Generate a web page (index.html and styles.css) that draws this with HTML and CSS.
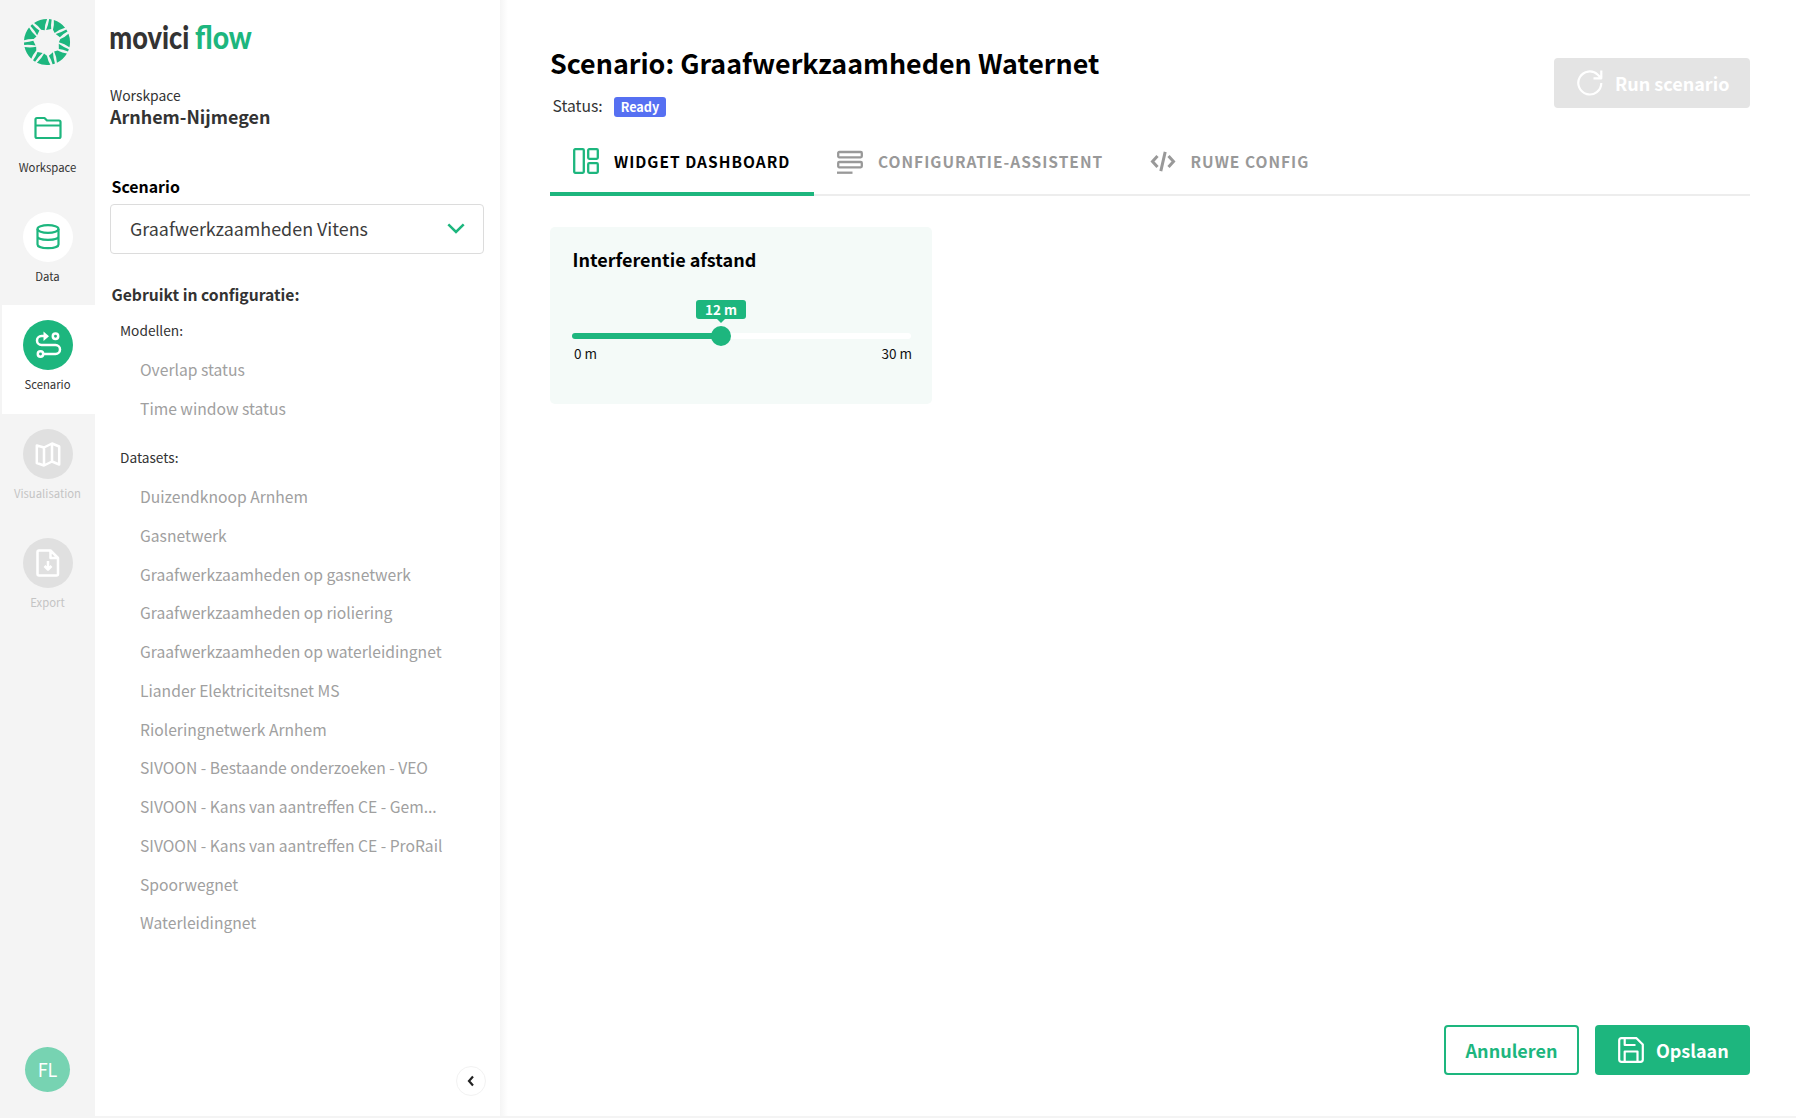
FILE: index.html
```html
<!DOCTYPE html>
<html lang="nl">
<head>
<meta charset="utf-8">
<title>Movici Flow</title>
<link rel="stylesheet" href="styles.css">
</head>
<body>
<div class="app">
  <nav class="rail">
    <svg class="rail-logo" viewBox="-24 -24 48 48">
      <g transform="rotate(-17)">
        <g id="blade">
          <path d="M-6.800-22A23 23 0 0 1 6.800-22Q3-17.500 1.200-11.800L-2-13.500Q-3.800-18.500-6.800-22Z"/>
          <path transform="rotate(25.710)" d="M-1.300-22.960A23 23 0 0 1 1.200-22.960Q1.100-17.500 2.200-13.600L-2.700-11.600Q-1.300-17-1.300-22.960Z"/>
        </g>
        <use href="#blade" transform="rotate(51.430)"/>
        <use href="#blade" transform="rotate(102.860)"/>
        <use href="#blade" transform="rotate(154.290)"/>
        <use href="#blade" transform="rotate(205.710)"/>
        <use href="#blade" transform="rotate(257.140)"/>
        <use href="#blade" transform="rotate(308.570)"/>
      </g>
    </svg>
    <a class="rail-item">
      <span class="disc"><svg viewBox="0 0 28 28" class="ico"><path d="M1.500 21V5.500Q1.500 4 3 4H10.500L13 6.500H25Q26.500 6.500 26.500 8V22.500Q26.500 24 25 24H3Q1.500 24 1.500 22.500ZM1.500 11.500H26.500"/></svg></span>
      <span class="rail-label">Workspace</span>
    </a>
    <a class="rail-item">
      <span class="disc"><svg viewBox="0 0 28 28" class="ico"><ellipse cx="14" cy="6" rx="10.500" ry="3.800"/><path d="M3.500 6V21.500C3.500 26.300 24.500 26.300 24.500 21.500V6M3.500 13.500C3.500 18 24.500 18 24.500 13.500"/></svg></span>
      <span class="rail-label">Data</span>
    </a>
    <a class="rail-item active">
      <span class="disc"><svg viewBox="0 0 28 28" class="ico"><path d="M11.500 5H7.500A4.500 4.500 0 0 0 7.500 14H21.500A4.500 4.500 0 0 1 21.500 23H9.500"/><path d="M9.500 .5 15 5.200 9.500 9.900Z" class="solid"/><circle cx="21.500" cy="5.200" r="2.700"/><circle cx="6.500" cy="23" r="2.700"/></svg></span>
      <span class="rail-label">Scenario</span>
    </a>
    <a class="rail-item disabled">
      <span class="disc"><svg viewBox="0 0 28 28" class="ico"><path d="M2.800 5.500 10 7.500 18 3.500 25.200 6.500V24.500L18 21.500 10 25.500 2.800 23ZM10 7.500V25.500M18 3.500V21.500"/></svg></span>
      <span class="rail-label">Visualisation</span>
    </a>
    <a class="rail-item disabled">
      <span class="disc"><svg viewBox="0 0 28 28" class="ico"><path d="M5 1.500H16.500L24 9V25Q24 26.500 22.500 26.500H5Q3.500 26.500 3.500 25V3Q3.500 1.500 5 1.500ZM16.500 1.500V9H24M14 12V20M10.500 17 14 20.500 17.500 17"/></svg></span>
      <span class="rail-label">Export</span>
    </a>
    <span class="avatar">FL</span>
  </nav>

  <aside class="panel">
    <div class="wordmark">
      <svg class="word-dark" viewBox="0 0 80 30"><text transform="scale(.8 1)" x="-1" y="24" textLength="100" lengthAdjust="spacingAndGlyphs">movici</text></svg>
      <svg class="word-green" viewBox="0 0 58 30"><text transform="scale(.8 1)" x="0" y="24" textLength="71" lengthAdjust="spacingAndGlyphs">flow</text></svg>
    </div>
    <div class="ws-label">Worskpace</div>
    <div class="ws-name">Arnhem-Nijmegen</div>
    <div class="field-label">Scenario</div>
    <div class="select"><span>Graafwerkzaamheden Vitens</span>
      <svg class="chevron" viewBox="0 0 18 11"><path d="M1.300 1.300 9 9 16.700 1.300"/></svg>
    </div>
    <h2 class="used">Gebruikt in configuratie:</h2>
    <h3 class="group">Modellen:</h3>
    <ul class="list">
      <li>Overlap status</li>
      <li>Time window status</li>
    </ul>
    <h3 class="group">Datasets:</h3>
    <ul class="list">
      <li>Duizendknoop Arnhem</li>
      <li>Gasnetwerk</li>
      <li>Graafwerkzaamheden op gasnetwerk</li>
      <li>Graafwerkzaamheden op rioliering</li>
      <li>Graafwerkzaamheden op waterleidingnet</li>
      <li>Liander Elektriciteitsnet MS</li>
      <li>Rioleringnetwerk Arnhem</li>
      <li>SIVOON - Bestaande onderzoeken - VEO</li>
      <li>SIVOON - Kans van aantreffen CE - Gem...</li>
      <li>SIVOON - Kans van aantreffen CE - ProRail</li>
      <li>Spoorwegnet</li>
      <li>Waterleidingnet</li>
    </ul>
    <button class="collapse"><svg viewBox="0 0 8 12"><path d="M6 1.500 2 6 6 10.500"/></svg></button>
  </aside>

  <main class="main">
    <header class="head">
      <div>
        <h1 class="title">Scenario: Graafwerkzaamheden Waternet</h1>
        <div class="status"><span class="status-label">Status:</span><span class="badge">Ready</span></div>
      </div>
      <button class="btn run"><svg class="ico" viewBox="0 0 28 28"><path d="M25.300 14A11.500 11.500 0 1 1 21.800 5.700L25 9M25.300 1.500V9.300H17.500"/></svg><span>Run scenario</span></button>
    </header>

    <div class="tabs">
      <a class="tab current"><svg viewBox="0 0 26 26"><rect x="1.200" y="1.200" width="9.600" height="23.600" rx="1"/><rect x="15.200" y="1.200" width="9.600" height="9.600" rx="1"/><rect x="15.200" y="15.200" width="9.600" height="9.600" rx="1"/></svg><span>WIDGET DASHBOARD</span></a>
      <a class="tab second"><svg viewBox="0 0 26 26"><rect x="1.200" y="3" width="23.600" height="5.300" rx="1"/><rect x="1.200" y="13" width="23.600" height="5.300" rx="1"/><path d="M0 23.700H15.500"/></svg><span>CONFIGURATIE-ASSISTENT</span></a>
      <a class="tab third"><svg viewBox="0 0 26 26"><path class="thick" d="M7.500 7 2.500 12.500 7.500 18M18.500 7 23.500 12.500 18.500 18M15.200 2.800 10.800 22.200"/></svg><span>RUWE CONFIG</span></a>
    </div>

    <section class="card">
      <h2 class="card-title">Interferentie afstand</h2>
      <div class="track">
        <div class="fill"></div>
        <div class="knob"><span class="tip">12 m</span></div>
      </div>
      <div class="scale"><span>0 m</span><span>30 m</span></div>
    </section>

    <footer class="actions">
      <button class="btn cancel">Annuleren</button>
      <button class="btn save"><svg class="ico" viewBox="0 0 26 26"><path d="M3.500 1.200H18.500L24.800 7.500V22.500Q24.800 24.800 22.500 24.800H3.500Q1.200 24.800 1.200 22.500V3.500Q1.200 1.200 3.500 1.200ZM6.700 1.200V8H17.500M6.700 24.800V14.500H19.500V24.800"/></svg><span>Opslaan</span></button>
    </footer>
  </main>
</div>
</body>
</html>
```
FILE: styles.css
```css
* { box-sizing: border-box; }
:root {
  --green: #1db67e;
  --ink: #333;
  --rail: #f4f4f4;
}
body {
  margin: 0;
  background: var(--rail);
  color: var(--ink);
  font-family: "Noto Sans CJK SC", "Noto Sans", sans-serif;
}
h1, h2, h3, ul { margin: 0; padding: 0; }
ul { list-style: none; }
button { font-family: inherit; padding: 0; border: 0; }
svg { display: block; fill: none; flex-shrink: 0; }
.app { display: flex; height: 1118px; }

/* Icon rail */
.rail {
  width: 95px;
  background: var(--rail);
  display: flex;
  flex-direction: column;
  align-items: flex-end;
}
.rail-logo { width: 48px; height: 48px; margin: 18px 24px 21.300px 0; fill: var(--green); }
.rail-item {
  width: 93px;
  height: 108.800px;
  padding-top: 15.500px;
  display: flex;
  flex-direction: column;
  align-items: center;
}
.rail-item.active { background: #fff; }
.disc {
  width: 50px;
  height: 50px;
  margin-right: 2px;
  border-radius: 50%;
  background: #fff;
  color: var(--green);
  display: flex;
  align-items: center;
  justify-content: center;
}
.active .disc { background: var(--green); color: #fff; }
.disabled .disc { background: #e0e0e0; color: #fff; }
.ico { width: 28px; height: 28px; stroke: currentColor; stroke-width: 2.200; stroke-linejoin: round; }
.active .ico, .disabled .ico { stroke-width: 2.500; }
.ico .solid { fill: currentColor; stroke: none; }
.rail-label { margin: 5px 2px 0 0; font-size: 11.300px; line-height: 18px; }
.disabled .rail-label { color: #c4c4c4; }
.avatar {
  width: 45px;
  height: 45px;
  margin: auto 25px 26.500px 0;
  border-radius: 50%;
  background: #77d3b2;
  color: #fff;
  font-size: 18px;
  line-height: 44px;
  text-align: center;
  font-weight: 400;
}

/* Scenario panel */
.panel {
  width: 405px;
  height: 1116px;
  padding: 25px 16px 0 15px;
  background: #fff;
  display: flex;
  flex-direction: column;
}
.wordmark { display: flex; gap: 5px; height: 30px; margin-bottom: 30px; }
.wordmark svg { height: 30px; overflow: visible; }
.wordmark text { font: 900 32px Lato, sans-serif; }
.word-dark { width: 80px; fill: var(--ink); }
.word-green { width: 58px; fill: var(--green); }
.ws-label { font-size: 13.900px; line-height: 20px; }
.ws-name { font-size: 17.900px; line-height: 22.500px; font-weight: 700; }
.field-label { margin: 47.500px 0 5px 1.500px; font-size: 15.900px; line-height: 24px; font-weight: 700; color: #000; }
.select {
  height: 50px;
  padding: 0 18px 2px 19px;
  border: 1px solid #dcdcdc;
  border-radius: 4px;
  display: flex;
  align-items: center;
  justify-content: space-between;
  font-size: 17.900px;
  color: #3c3c3c;
}
.chevron { width: 18px; height: 11px; stroke: var(--green); stroke-width: 2.500; }
.used { margin: 29px 0 13px 1.500px; font-size: 15.700px; line-height: 24px; font-weight: 700; }
.group { margin-left: 10px; font-size: 13.700px; line-height: 20px; font-weight: 400; }
.list { margin: 11.100px 0 18.500px 30px; font-size: 15.660px; line-height: 38.750px; color: #a0a0a0; white-space: nowrap; }
.collapse {
  width: 30px;
  height: 30px;
  margin: auto -2px 20.500px auto;
  border: 1px solid #f2f2f2;
  border-radius: 50%;
  background: #fff;
  display: flex;
  align-items: center;
  justify-content: center;
}
.collapse svg { width: 8px; height: 12px; stroke: #222; stroke-width: 2.200; }

/* Main area */
.main {
  flex: 1;
  height: 1116px;
  padding: 45px 46px 41px 50px;
  background: linear-gradient(90deg, #f5f5f5, #fff 8px);
  display: flex;
  flex-direction: column;
}
.head { display: flex; justify-content: space-between; height: 84px; }
.title { font-size: 26.850px; line-height: 36px; font-weight: 700; color: #000; }
.status { display: flex; margin: 13px 0 0 2.500px; }
.status-label { width: 61.500px; font-size: 15.700px; line-height: 24px; }
.badge {
  height: 20px;
  width: 52px;
  margin-top: 3px;
  border-radius: 3px;
  background: #5670f2;
  color: #fff;
  font-size: 12.700px;
  line-height: 20px;
  font-weight: 700;
  text-align: center;
}
.btn { height: 50px; border-radius: 4px; display: flex; align-items: center; font-size: 18px; font-weight: 700; }
.run { width: 196px; margin-top: 13px; padding-left: 22px; gap: 11px; background: #e4e4e4; color: #fff; }
.tabs { display: flex; height: 67px; border-bottom: 2px solid #ededed; }
.tab {
  height: 67px;
  padding: 0 0 3px 23px;
  display: flex;
  align-items: center;
  gap: 15px;
  color: #999;
  font-size: 15.500px;
  font-weight: 700;
  letter-spacing: 1px;
}
.tab svg { width: 26px; height: 26px; margin-top: 1px; stroke: currentColor; stroke-width: 2.300; }
.tab .thick { stroke-width: 3; }
.tab span { white-space: nowrap; }
.current { width: 264px; border-bottom: 4px solid var(--green); padding-bottom: 0; }
.current svg { color: var(--green); }
.current span { color: #000; }
.second { width: 312.500px; }
.card {
  width: 382px;
  height: 177px;
  margin-top: 31px;
  padding: 20px 20px 0 22px;
  border-radius: 5px;
  background: #f4faf8;
}
.card-title { padding-left: .5px; font-size: 18px; line-height: 24px; font-weight: 700; color: #000; }
.track { position: relative; height: 6px; width: 339px; margin-top: 62px; border-radius: 3px; background: #fff; }
.fill { width: 149px; height: 6px; border-radius: 3px; background: var(--green); }
.knob { position: absolute; left: 139px; top: -7px; width: 20px; height: 20px; border-radius: 50%; background: var(--green); }
.tip {
  position: absolute;
  left: -15px;
  top: -26px;
  width: 50px;
  height: 19px;
  border-radius: 3px;
  background: var(--green);
  color: #fff;
  font-size: 13.500px;
  line-height: 18px;
  font-weight: 700;
  text-align: center;
}
.tip::after {
  content: "";
  position: absolute;
  left: 21px;
  top: 19px;
  border: 4px solid transparent;
  border-top-color: var(--green);
  border-bottom: 0;
}
.scale { display: flex; justify-content: space-between; padding: 0 0 0 2px; margin-top: 4px; font-size: 13.500px; line-height: 20px; color: #111; }
.actions { display: flex; justify-content: flex-end; gap: 16px; margin-top: auto; }
.cancel { width: 135px; padding-bottom: 1px; justify-content: center; border: 2.500px solid var(--green); background: #fff; color: var(--green); }
.save { width: 155px; padding-left: 23px; gap: 12px; background: var(--green); color: #fff; }
.save .ico { width: 26px; height: 26px; }
```
